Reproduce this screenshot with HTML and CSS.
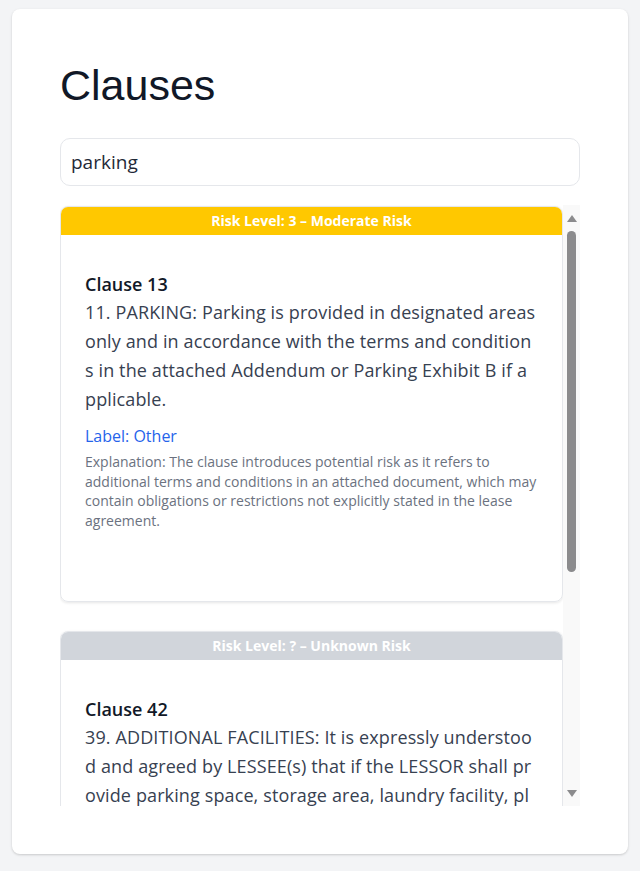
FILE: index.html
```html
<!DOCTYPE html>
<html lang="en">
<head>
    <meta charset="UTF-8">
    <meta name="viewport" content="width=device-width, initial-scale=1.0">
    <title>Clauses</title>
    <link rel="stylesheet" href="styles.css">
</head>
<body>
    <div class="container">
        <h1>Clauses</h1>
        <input type="text" class="search" value="parking" placeholder="Search clauses...">

        <div class="clause-scroll">
            <div class="clause-list">
                <div class="clause">
                    <div class="risk risk-3">Risk Level: 3 – Moderate Risk</div>
                    <div class="clause-body">
                        <h3>Clause 13</h3>
                        <p class="clause-text">11. PARKING: Parking is provided in designated areas only and in accordance with the terms and conditions in the attached Addendum or Parking Exhibit B if applicable.</p>
                        <p class="label">Label: Other</p>
                        <p class="explanation">Explanation: The clause introduces potential risk as it refers to additional terms and conditions in an attached document, which may contain obligations or restrictions not explicitly stated in the lease agreement.</p>
                    </div>
                </div>

                <div class="clause">
                    <div class="risk risk-unknown">Risk Level: ? – Unknown Risk</div>
                    <div class="clause-body">
                        <h3>Clause 42</h3>
                        <p class="clause-text">39. ADDITIONAL FACILITIES: It is expressly understood and agreed by LESSEE(s) that if the LESSOR shall provide parking space, storage area, laundry facility, playground, swimming pool or other facilities, the use of such facilities shall be at the sole risk of the LESSEE(s).</p>
                        <p class="label">Label: Other</p>
                        <p class="explanation">Explanation: No explanation available.</p>
                    </div>
                </div>
            </div>
            <!-- scrollbar drawn by hand, the headless browser hides the native one -->
            <div class="scrollbar">
                <div class="scroll-btn"><span class="arrow-up"></span></div>
                <div class="scroll-track"><div class="scroll-thumb"></div></div>
                <div class="scroll-btn"><span class="arrow-down"></span></div>
            </div>
        </div>
    </div>
</body>
</html>
```

FILE: styles.css
```css
body {
    margin: 0;
    padding: 9px 12px;
    background-color: #f3f4f6;
    font-family: 'Open Sans', 'Noto Sans', sans-serif;
    color: #374151;
}
.container {
    background-color: #fff;
    padding: 48px;
    border-radius: 8px;
    box-shadow: 0 1px 3px rgba(0,0,0,0.12), 0 1px 2px rgba(0,0,0,0.06);
}
h1 {
    font-family: 'Liberation Sans', Arial, sans-serif;
    font-weight: normal;
    font-size: 43px;
    line-height: 52px;
    color: #111827;
    margin: 2px 0 27px;
}
.search {
    display: block;
    box-sizing: border-box;
    width: 100%;
    height: 48px;
    padding: 0 10px;
    border: 1px solid #e5e7eb;
    border-radius: 10px;
    font-family: inherit;
    font-size: 19px;
    color: #1f2937;
    outline: none;
}
.clause-scroll {
    display: flex;
    margin-top: 19px;
    height: 601px;
}
.clause-list {
    flex: 1;
    overflow: hidden;
}
.scrollbar {
    width: 17px;
    display: flex;
    flex-direction: column;
    background-color: #f9f9f9;
}
.scroll-btn {
    height: 26px;
    display: flex;
    align-items: center;
    justify-content: center;
}
.arrow-up {
    border-left: 5px solid transparent;
    border-right: 5px solid transparent;
    border-bottom: 7px solid #8b8b8d;
}
.arrow-down {
    border-left: 5px solid transparent;
    border-right: 5px solid transparent;
    border-top: 7px solid #8b8b8d;
}
.scroll-track {
    flex: 1;
}
.scroll-thumb {
    width: 9px;
    height: 341px;
    margin: 0 auto;
    background-color: #8b8b8d;
    border-radius: 5px;
}
.clause {
    margin: 1px 0 29px;
    border: 1px solid #e5e7eb;
    border-radius: 8px;
    box-shadow: 0 1px 3px rgba(0,0,0,0.1);
    overflow: hidden;
}
.risk {
    height: 28px;
    line-height: 28px;
    text-align: center;
    color: #fff;
    font-weight: bold;
    font-size: 14px;
}
.risk-3 {
    background-color: #ffc800;
}
.risk-unknown {
    background-color: #d1d5db;
}
.clause-body {
    box-sizing: border-box;
    min-height: 366px;
    padding: 35px 24px 24px;
}
.clause-body h3 {
    margin: 0;
    font-size: 18px;
    line-height: 28px;
    font-weight: 600;
    color: #111827;
}
.clause-text {
    margin: 0;
    font-size: 18px;
    line-height: 29px;
    letter-spacing: 0.12px;
    word-break: break-all;
}
.label {
    margin: 10px 0 4px;
    font-size: 16px;
    line-height: 24px;
    font-weight: 500;
    color: #2563eb;
}
.explanation {
    margin: 0;
    font-size: 14px;
    line-height: 19.5px;
    color: #6b7280;
}
```
